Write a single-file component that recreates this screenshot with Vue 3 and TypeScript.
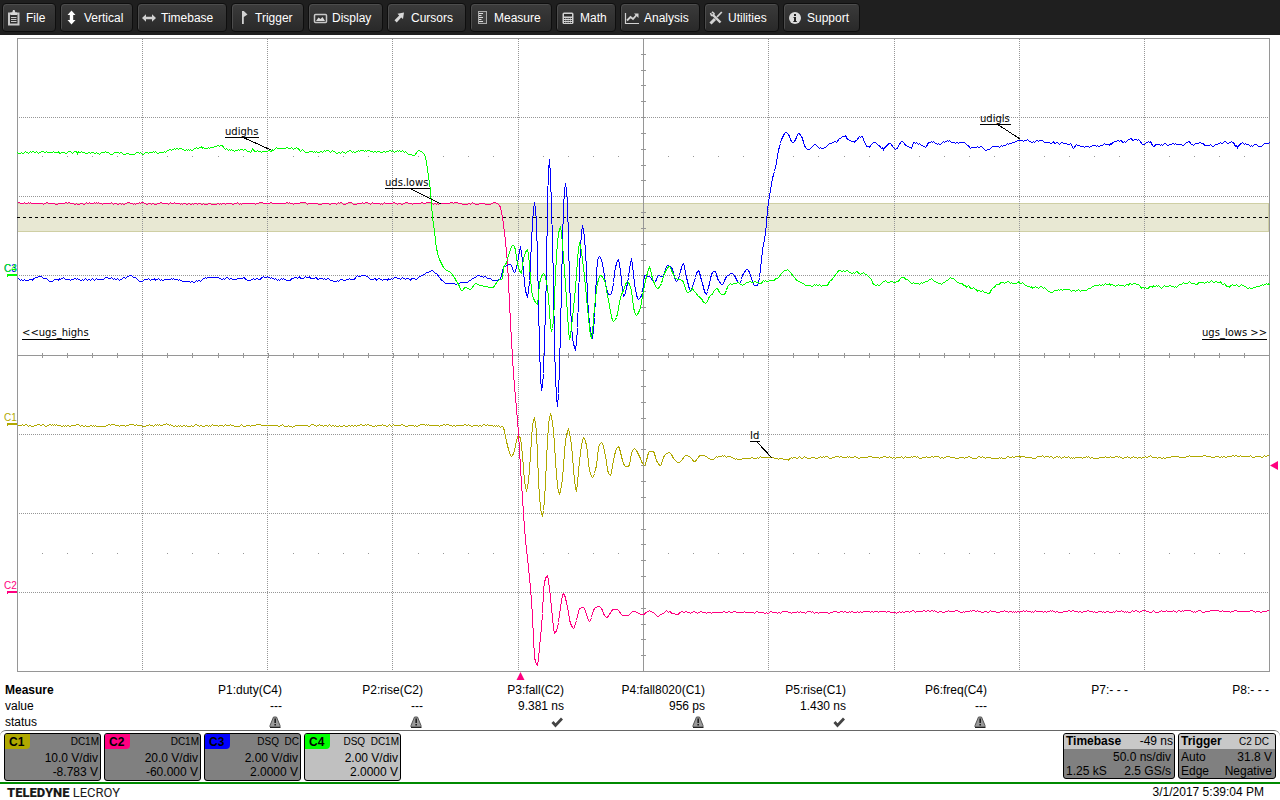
<script setup lang="ts">
interface MenuItem { id: string; label: string; width: number }
interface Measurement { name: string; value: string; status: '' | 'warn' | 'ok' }
interface Channel { id: string; coupling: string; scale: string; offset: string; active: boolean }
interface Callout { text: string; x: number; y: number; end: number; rule: number; leader?: number[] }
type Point = [number, number]

const menu: MenuItem[] = [
  { id: 'file', label: 'File', width: 54 },
  { id: 'vertical', label: 'Vertical', width: 73 },
  { id: 'timebase', label: 'Timebase', width: 90 },
  { id: 'trigger', label: 'Trigger', width: 73 },
  { id: 'display', label: 'Display', width: 75 },
  { id: 'cursors', label: 'Cursors', width: 79 },
  { id: 'measure', label: 'Measure', width: 82 },
  { id: 'math', label: 'Math', width: 60 },
  { id: 'analysis', label: 'Analysis', width: 80 },
  { id: 'utilities', label: 'Utilities', width: 75 },
  { id: 'support', label: 'Support', width: 77 },
]

const measurements: Measurement[] = [
  { name: 'P1:duty(C4)', value: '---', status: 'warn' },
  { name: 'P2:rise(C2)', value: '---', status: 'warn' },
  { name: 'P3:fall(C2)', value: '9.381 ns', status: 'ok' },
  { name: 'P4:fall8020(C1)', value: '956 ps', status: 'warn' },
  { name: 'P5:rise(C1)', value: '1.430 ns', status: 'ok' },
  { name: 'P6:freq(C4)', value: '---', status: 'warn' },
  { name: 'P7:- - -', value: '', status: '' },
  { name: 'P8:- - -', value: '', status: '' },
]

const channels: Channel[] = [
  { id: 'C1', coupling: 'DC1M', scale: '10.0 V/div', offset: '-8.783 V', active: false },
  { id: 'C2', coupling: 'DC1M', scale: '20.0 V/div', offset: '-60.000 V', active: false },
  { id: 'C3', coupling: 'DSQ  DC', scale: '2.00 V/div', offset: '2.0000 V', active: false },
  { id: 'C4', coupling: 'DSQ  DC1M', scale: '2.00 V/div', offset: '2.0000 V', active: true },
]

const callouts: Callout[] = [
  { text: 'udighs', x: 225, y: 135, end: 259, rule: 137, leader: [242, 137, 271, 150] },
  { text: 'uds.lows', x: 385, y: 186, end: 430, rule: 188, leader: [409, 188, 441, 204] },
  { text: 'udigls', x: 980, y: 122, end: 1011, rule: 124, leader: [997, 124, 1020, 139] },
  { text: 'Id', x: 750, y: 439, end: 760, rule: 441, leader: [757, 442, 772, 458] },
  { text: '<<ugs_highs', x: 22, y: 336, end: 90, rule: 339 },
  { text: 'ugs_lows >>', x: 1202, y: 336, end: 1267, rule: 339 },
]

/* Graticule: 10 x 8 divisions, 5 subdivisions each */
const left = 17
const right = 1269
const top = 38
const bottom = 671
const gx = (n: number) => Math.round(left + 0.2 + (n * (right - left)) / 50)
const gy = (n: number) => Math.round(top + (n * (bottom - top)) / 40)
const range = (n: number) => Array.from({ length: n }, (_, i) => i + 1)
const columns = [142, 267, 392, 518, 768, 894, 1019, 1144]
const rows = [117, 196, 275, 434, 513, 592]
const xTicks = range(49).map(gx)
const yTicks = range(39).map(gy)
const dotTicks = range(49).filter(n => n % 5 !== 0).map(gx)
const axisX = 643
const axisY = 355

/* Monotone cubic through the sample points, plus a small deterministic noise */
function trace(source: string, amplitude: number, quietFrom: number, quietTo: number, seed: number): string {
  const pts = source.trim().split(/\s+/).map(p => p.split(',').map(Number) as Point)
  const last = pts.length - 1
  const d = pts.slice(0, last).map((p, i) => (pts[i + 1][1] - p[1]) / (pts[i + 1][0] - p[0]))
  const m = pts.map((_, i) => {
    if (i === 0 || i === last) return 0
    return d[i - 1] * d[i] <= 0 ? 0 : (2 * d[i - 1] * d[i]) / (d[i - 1] + d[i])
  })
  let state = seed
  let noise = 0
  let k = 0
  const out: string[] = []
  for (let x = pts[0][0]; x <= pts[last][0]; x++) {
    while (k < last - 1 && x > pts[k + 1][0]) k++
    const h = pts[k + 1][0] - pts[k][0]
    const t = (x - pts[k][0]) / h
    const base = (2 * t ** 3 - 3 * t ** 2 + 1) * pts[k][1] + (t ** 3 - 2 * t ** 2 + t) * h * m[k]
      + (3 * t ** 2 - 2 * t ** 3) * pts[k + 1][1] + (t ** 3 - t ** 2) * h * m[k + 1]
    state = (state * 1103515245 + 12345) % 2147483648
    noise = noise * 0.6 + (state / 2147483648 - 0.5) * 2
    const jitter = x > quietFrom && x < quietTo ? 0 : noise * amplitude
    out.push(`${x + 0.5},${Math.round(base + jitter) + 0.5}`)
  }
  return out.join(' ')
}

const c1 = trace(`17,425 490,425 502,426 504,431 507,445 511,456 513,453 518,435 520,438 522,455 524,480
526,490 528,480 530,455 532,425 534,418 536,432 538,480 540,507 542,515 544,500 546,460 548,425 550,414 553,430
555,460 557,485 559,493 562,478 565,440 568,429 571,445 574,480 576,491 578,470 581,445 583,437 586,445 589,470
592,477 596,465 598,447 601,442 605,455 608,473 610,475 613,460 616,448 618,446 622,460 625,466 628,466 632,450
634,448 638,454 644,465 649,451 653,451 656,460 660,465 664,455 669,452 673,458 678,462 686,455 690,457 694,461
700,455 703,455 711,459 720,456 730,457 740,458 750,457 770,457 785,459 800,457 900,457 1100,457 1269,456`, 0.8, 503, 715, 71)

const c2 = trace(`17,203 497,203 500,207 502,217 504,232 507,263 509,303 511,340 513,373 517,420 518,433
520,467 523,513 525,540 527,557 529,577 531,600 533,637 534,657 537,665 539,647 542,613 543,590 545,578 547,575
549,588 552,617 554,633 557,627 560,607 563,593 567,607 570,623 573,628 576,620 579,608 583,607 589,621 594,608
599,606 606,617 613,609 617,609 622,615 627,615 633,611 642,614 648,611 658,615 667,611 675,614 683,611 690,612
750,612 1000,611 1269,611`, 0.7, 499, 640, 1213)

const c3 = trace(`17,279 30,280 40,277 50,281 60,278 67,279 90,279 110,278 120,279 131,276 140,280 165,279
185,280 192,282 205,278 220,278 250,279 267,277 280,279 305,277 318,278 333,281 345,279 366,275 372,279 400,278
410,279 420,277 425,272 431,270 436,273 442,280 450,284 460,283 470,280 480,276 485,277 495,280 500,278 503,267
510,264 514,272 517,263 520,247 522,260 525,290 527,296 529,280 532,223 534,202 536,223 538,303 539,347 541,390
543,373 544,340 546,273 547,200 549,159 551,207 553,283 554,347 557,406 559,367 561,287 563,207 565,183 567,203
569,280 572,337 575,349 577,327 579,267 582,225 585,250 588,313 592,337 594,317 597,260 599,256 602,263 605,283
608,294 611,293 615,267 618,259 621,280 623,296 627,283 631,259 634,283 638,299 642,292 644,275 650,277 654,282
658,275 662,276 667,265 671,267 676,281 678,278 683,263 686,277 690,290 693,283 698,270 701,280 706,294 708,287
712,272 715,271 717,278 722,284 726,276 732,273 739,283 743,273 747,269 750,275 754,285 757,285 759,277 762,250
765,233 767,210 770,190 772,178 775,167 778,150 782,137 785,132 788,134 792,142 794,141 798,133 801,136 805,147
808,149 815,144 819,148 823,149 827,144 837,140 844,136 848,139 853,141 861,137 864,141 868,147 875,142 883,148
889,142 895,148 902,141 906,146 911,148 913,143 918,143 923,147 931,141 937,144 947,141 963,143 973,148 978,146
986,149 993,146 1003,145 1017,141 1032,141 1043,141 1057,143 1070,144 1073,148 1075,145 1087,146 1100,145 1112,143
1117,140 1123,142 1128,139 1137,140 1145,143 1150,142 1153,145 1167,144 1180,144 1188,142 1191,145 1200,143
1207,145 1217,144 1227,142 1232,142 1237,146 1243,143 1250,146 1255,144 1260,146 1269,142`, 1, 490, 820, 977)

const c4 = trace(`17,152 60,152 142,153 150,152 165,151 178,148 185,150 200,148 218,146 225,148 235,150 243,150
250,152 252,148 255,150 267,151 280,148 295,148 305,151 315,151 330,151 345,152 365,150 375,152 390,151 400,151
413,153 418,151 423,152 425,157 428,176 430,190 432,217 434,231 436,248 440,261 445,269 450,272 455,279 458,284
461,290 465,287 470,289 475,283 480,285 485,286 492,287 498,280 502,278 503,267 506,262 508,255 512,245 514,246
517,263 521,273 523,258 527,249 530,277 531,290 533,298 537,304 539,283 543,273 547,287 551,331 553,320 555,273
558,233 560,227 563,257 567,313 569,339 572,317 575,287 579,243 583,267 587,307 591,338 594,307 597,283 600,275
604,280 608,300 613,321 616,317 620,297 623,290 627,281 631,290 633,307 636,315 640,307 643,290 647,272 649,267
652,278 657,288 660,285 664,273 669,266 672,272 675,278 682,280 687,292 692,289 697,295 705,302 710,295 717,288
722,295 725,293 728,285 738,283 743,284 748,281 757,283 763,281 772,281 777,277 786,269 793,276 800,283 813,285
827,283 833,277 840,270 847,270 853,273 863,273 870,278 873,284 880,283 885,280 893,282 902,278 910,281 917,283
923,283 930,279 940,284 950,278 960,284 973,288 983,292 989,292 993,287 1003,282 1019,283 1032,287 1043,287
1050,291 1063,289 1073,289 1083,290 1093,286 1107,284 1120,285 1132,283 1147,288 1153,286 1173,287 1187,282
1200,283 1212,282 1220,282 1227,285 1243,286 1253,287 1269,284`, 1, 423, 690, 3391)
</script>

<template>
  <div class="scope">
    <nav class="menu" aria-label="Main menu">
      <button v-for="item in menu" :key="item.id" type="button" class="menu-button" :style="{ width: item.width + 'px' }">
        <svg class="menu-icon" viewBox="0 0 16 16" aria-hidden="true">
          <g v-if="item.id === 'file'">
            <path d="M3 3.500h9.500v11H3z" fill="none" stroke="#c8c8c8" stroke-width="2" />
            <path d="M4.500 5V2.500h1.700L7 0h1.600l.8 2.500H11V5z" fill="#d8d8d8" />
            <path d="M5 7.500h5.500M5 9.500h5.500M5 11.500h5.500" stroke="#c8c8c8" />
          </g>
          <path v-else-if="item.id === 'vertical'" d="M7.500 0.500l4 4.500H9.200v5h2.300l-4 4.500-4-4.500h2.300V5H3.500z" fill="#fff" />
          <path v-else-if="item.id === 'timebase'" d="M1 8l4-3.800v2.600h6V4.200L15 8l-4 3.800V9.200H5v2.600z" fill="#d2d2d2" />
          <path v-else-if="item.id === 'trigger'" d="M7 1h1.800l3.700 3.500L8.800 7v7H7z" fill="#d2d2d2" />
          <g v-else-if="item.id === 'display'">
            <rect x="2.500" y="4.500" width="12" height="8" rx="1" fill="none" stroke="#c8c8c8" stroke-width="1.500" />
            <path d="M4 11l2.500-3.500 2 1.500 2-2L13 11z" fill="#d8d8d8" />
          </g>
          <path v-else-if="item.id === 'cursors'" d="M13 2.500L12 9l-1.800-1.500-4.500 5-2.200-2.200 4.700-4.800L6.500 3.700z" fill="#d8d8d8" />
          <g v-else-if="item.id === 'measure'">
            <rect x="4.500" y="1.500" width="8" height="12" fill="#444" stroke="#aaa" />
            <path d="M5 3.500h4M5 5.500h2.500M5 7.500h4M5 9.500h2.500M5 11.500h4" stroke="#ddd" />
          </g>
          <g v-else-if="item.id === 'math'">
            <rect x="2.500" y="2.500" width="11" height="11.500" rx="1.500" fill="#d2d2d2" />
            <path d="M4 4h8v2.500H4zM4 8h1.500v1H4zM6.200 8h1.500v1H6.200zM8.400 8h1.500v1H8.400zM10.600 8H12v1h-1.400zM4 10h1.500v1H4zM6.200 10h1.500v1H6.200zM8.400 10h1.500v1H8.400zM10.600 10H12v1h-1.400zM4 12h1.500v1H4zM6.200 12h1.500v1H6.200zM8.400 12h1.500v1H8.400zM10.600 12H12v1h-1.400z" fill="#2c2c2c" />
          </g>
          <g v-else-if="item.id === 'analysis'" fill="none" stroke="#d2d2d2">
            <path d="M1.500 3v10.500H15" stroke-width="1.200" />
            <path d="M3 10.500l3.500-3.500 2.500 2 4-4.500" stroke-width="1.800" />
            <path d="M10 3.500h4.500V8z" fill="#d2d2d2" stroke="none" />
          </g>
          <g v-else-if="item.id === 'utilities'" fill="none" stroke="#d2d2d2">
            <path d="M4.500 4.500l8 8" stroke-width="2.400" />
            <path d="M2.500 3l1 2.500h2L6 3.500 4 1.800" stroke-width="1.600" />
            <path d="M13.800 2L9 7" stroke-width="1.800" />
            <path d="M7 9l-4.500 4.500" stroke-width="3" />
          </g>
          <g v-else>
            <circle cx="8" cy="8" r="6" fill="#dcdcdc" />
            <path d="M7 4h2v2H7zM6.500 7H9v4h.8v1H6.300v-1H7V8h-.5z" fill="#222" />
          </g>
        </svg>
        <span>{{ item.label }}</span>
      </button>
    </nav>

    <svg class="plot" viewBox="0 35 1280 647" role="img" aria-label="Waveform grid">
      <g shape-rendering="crispEdges">
        <rect x="17.500" y="203.500" width="1251" height="28" class="band" />
        <g class="grid">
          <line v-for="x in columns" :key="'c' + x" :x1="x + 0.5" :x2="x + 0.5" y1="39" y2="671" stroke-dasharray="1 1" />
          <line v-for="y in rows" :key="'r' + y" x1="19" x2="1269" :y1="y + 0.5" :y2="y + 0.5" stroke-dasharray="1 1" />
          <line :x1="axisX + 0.5" :x2="axisX + 0.5" y1="38" y2="671" />
          <line x1="17" x2="1269" :y1="axisY + 0.5" :y2="axisY + 0.5" />
          <line v-for="x in xTicks" :key="'x' + x" :x1="x + 0.5" :x2="x + 0.5" y1="353" y2="358" />
          <line v-for="y in yTicks" :key="'y' + y" x1="641" x2="646" :y1="y + 0.5" :y2="y + 0.5" />
          <rect x="17.500" y="38.500" width="1252" height="633" />
        </g>
        <g class="dots">
          <template v-for="x in dotTicks" :key="'d' + x">
            <rect :x="x" y="156" width="1" height="1" />
            <rect :x="x" y="553" width="1" height="1" />
          </template>
        </g>
        <line x1="17" x2="1269" y1="217.500" y2="217.500" stroke="#000" stroke-dasharray="3 3" />
        <polyline :points="c1" class="wave wave-c1" />
        <polyline :points="c2" class="wave wave-c2" />
        <polyline :points="c3" class="wave wave-c3" />
        <polyline :points="c4" class="wave wave-c4" />
        <g v-for="c in callouts" :key="c.text" stroke="#000">
          <line :x1="c.x" :x2="c.end" :y1="c.rule + 0.5" :y2="c.rule + 0.5" />
          <line v-if="c.leader" :x1="c.leader[0]" :y1="c.leader[1]" :x2="c.leader[2]" :y2="c.leader[3]" />
        </g>
        <path d="M7 274h10v2H8v1H7z" fill="#0f0" />
        <path d="M7 423h10v2H8v1H7z" fill="#b0a800" />
        <path d="M7 591h10v2H8v1H7z" fill="#ff0080" />
      </g>
      <g class="callout-text">
        <text v-for="c in callouts" :key="c.text" :x="c.x" :y="c.y">{{ c.text }}</text>
      </g>
      <g class="marker-text">
        <text x="4" y="272" fill="#00f">C3</text>
        <text x="4" y="272" fill="#0f0">C4</text>
        <text x="4" y="421" fill="#b0a800">C1</text>
        <text x="4" y="589" fill="#ff0080">C2</text>
      </g>
      <path d="M1270 465.500l8-4.500v9zM520.500 672l4 8h-8z" fill="#ff0080" />
    </svg>

    <div class="measure">
      <table>
        <thead>
          <tr>
            <th scope="col" class="title">Measure</th>
            <th v-for="m in measurements" :key="m.name" scope="col">{{ m.name }}</th>
          </tr>
        </thead>
        <tbody>
          <tr>
            <th scope="row">value</th>
            <td v-for="m in measurements" :key="m.name">{{ m.value }}</td>
          </tr>
          <tr>
            <th scope="row">status</th>
            <td v-for="m in measurements" :key="m.name">
              <svg v-if="m.status === 'warn'" class="status" viewBox="0 0 12 12" role="img" aria-label="Warning">
                <path d="M4.500 1h3L11 9.500V11H1V9.500z" fill="#999" stroke="#555" />
                <path d="M1 11.500h10.500" stroke="#222" />
                <path d="M5.500 2.500h1.300v4.500H5.500zM5.500 8h1.300v1.500H5.500z" fill="#000" />
              </svg>
              <svg v-else-if="m.status === 'ok'" class="status" viewBox="0 0 12 12" role="img" aria-label="OK">
                <path d="M1.500 6l3 3.500L11 2.500" fill="none" stroke="#444" stroke-width="2.800" />
              </svg>
            </td>
          </tr>
        </tbody>
      </table>
    </div>

    <section class="descriptors">
      <div class="channels">
        <button v-for="c in channels" :key="c.id" type="button" class="card channel" :class="{ active: c.active }">
          <span class="head">
            <span class="tab" :class="'tab-' + c.id.toLowerCase()">{{ c.id }}</span>
            <span class="coupling">{{ c.coupling }}</span>
          </span>
          <span class="line">{{ c.scale }}</span>
          <span class="line">{{ c.offset }}</span>
        </button>
      </div>
      <div class="system">
        <button type="button" class="card timebase">
          <span class="bar"><b>Timebase</b><span>-49 ns</span></span>
          <span class="pair end"><span>50.0 ns/div</span></span>
          <span class="pair"><span>1.25 kS</span><span>2.5 GS/s</span></span>
        </button>
        <button type="button" class="card trigger">
          <span class="bar"><b>Trigger</b><span class="coupling source">C2  DC</span></span>
          <span class="pair"><span>Auto</span><span>31.8 V</span></span>
          <span class="pair"><span>Edge</span><span>Negative</span></span>
        </button>
      </div>
    </section>

    <footer class="footer">
      <span class="brand"><b>TELEDYNE</b> LECROY</span>
      <time datetime="2017-03-01T17:39:04">3/1/2017 5:39:04 PM</time>
    </footer>
  </div>
</template>

<style>
body {
  margin: 0;
  background: #fff;
}
</style>

<style scoped>
.scope {
  font: 12px/16px "Liberation Sans", Arial, sans-serif;
  color: #000;
  background: #fff;
}
button {
  font: inherit;
  color: inherit;
  margin: 0;
  box-sizing: border-box;
}
.menu {
  display: flex;
  gap: 4px;
  height: 35px;
  padding: 3px 2px;
  box-sizing: border-box;
  background: #1f1f1f;
}
.menu-button {
  display: flex;
  align-items: center;
  gap: 4px;
  padding: 0 0 0 3px;
  color: #fff;
  background: linear-gradient(#3b3b3b, #292929);
  border: 1px solid #0e0e0e;
  border-radius: 4px;
  box-shadow: inset 1px 1px #4c4c4c;
  white-space: nowrap;
}
.menu-icon {
  width: 16px;
  height: 16px;
  flex: none;
}
.plot {
  display: block;
  width: 100%;
  height: auto;
}
.band {
  fill: #e8e8d3;
  stroke: #cfcfa4;
}
.grid {
  fill: none;
  stroke: #969696;
}
.dots {
  fill: #969696;
}
.wave {
  fill: none;
  stroke-width: 1;
}
.wave-c1 { stroke: #b0a800; }
.wave-c2 { stroke: #ff0080; }
.wave-c3 { stroke: #0000ff; }
.wave-c4 { stroke: #00ff00; }
.callout-text {
  font: 10px "DejaVu Sans", sans-serif;
}
.marker-text {
  font: 10px "Liberation Sans", Arial, sans-serif;
}
.measure {
  padding-right: 11px;
}
table {
  width: 100%;
  table-layout: fixed;
  border-collapse: collapse;
}
th,
td {
  height: 16px;
  padding: 0;
  text-align: right;
  font-weight: normal;
  white-space: nowrap;
}
tr > th:first-child {
  text-align: left;
  padding-left: 5px;
}
tr > .title {
  font-weight: bold;
}
.status {
  display: block;
  width: 12px;
  height: 12px;
  margin: 0 1px 1px auto;
}
.descriptors {
  display: flex;
  justify-content: space-between;
  align-items: flex-start;
  padding: 2px 4px 1px;
  border-top: 1px solid #666;
  border-radius: 6px 6px 0 0;
}
.channels,
.system {
  display: flex;
  gap: 3px;
}
.card {
  display: flex;
  flex-direction: column;
  padding: 0;
  border: 1px solid #000;
  border-radius: 3px;
  background: #808080;
  line-height: 14px;
  overflow: hidden;
  white-space: pre;
}
.channel {
  width: 97px;
  height: 48px;
}
.channel.active {
  background: #c0c0c0;
}
.head {
  display: flex;
  justify-content: space-between;
  height: 17px;
  padding-right: 1px;
}
.tab {
  width: 25px;
  height: 15px;
  box-sizing: border-box;
  padding-left: 4px;
  text-align: left;
  font-weight: bold;
  line-height: 16px;
  border-radius: 0 0 4px 0;
}
.tab-c1 { background: #b0a800; }
.tab-c2 { background: #ff0080; }
.tab-c3 { background: #0000ff; }
.tab-c4 { background: #00ff00; }
.coupling {
  font-size: 10px;
  line-height: 15px;
}
.line {
  text-align: right;
  padding-right: 2px;
}
.timebase {
  width: 112px;
  height: 46px;
}
.trigger {
  width: 98px;
  height: 46px;
}
.bar {
  display: flex;
  justify-content: space-between;
  height: 15px;
  line-height: 15px;
  padding: 0 1px 0 2px;
  margin-bottom: 1px;
  background: #c8c8c8;
}
.source {
  padding-right: 5px;
}
.pair {
  display: flex;
  justify-content: space-between;
  padding: 0 3px 0 2px;
}
.pair.end {
  justify-content: flex-end;
}
.footer {
  display: flex;
  justify-content: space-between;
  height: 16px;
  padding: 0 16px 0 7px;
  border-top: 2px solid #008a00;
}
.brand {
  font: 13px/18px Roboto, sans-serif;
  color: #1a1a1a;
}
.brand b {
  font-weight: 900;
}
</style>
